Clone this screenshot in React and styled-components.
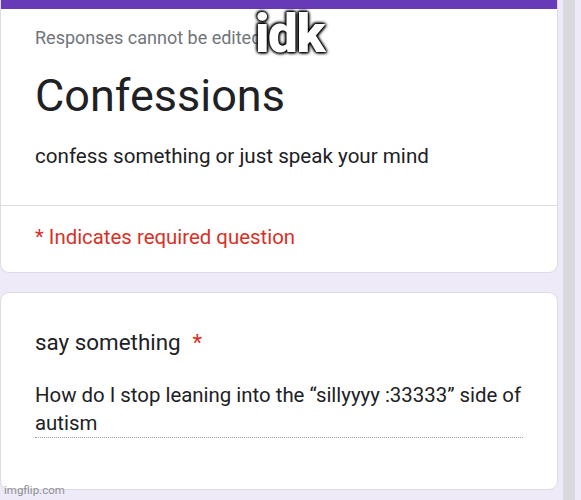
import React from "react";
import styled, { createGlobalStyle } from "styled-components";

const Global = createGlobalStyle`
  html, body { margin: 0; padding: 0; }
  body {
    background: #eeeaf8;
    font-family: Roboto, "Noto Sans", Arial, sans-serif;
    width: 581px;
    height: 500px;
    overflow: hidden;
  }
`;

const Page = styled.div`
  position: relative;
  display: flex;
  width: 581px;
  height: 500px;
`;

const Column = styled.div`
  width: 558px;
  display: flex;
  flex-direction: column;
  gap: 19px;
`;

const Card = styled.section`
  background: #fff;
  border: 1px solid #dcdce2;
  box-sizing: border-box;
  border-radius: ${(p) => (p.$top ? "0 0 9px 9px" : "9px")};
  border-top: ${(p) => (p.$top ? "none" : "1px solid #dcdce2")};
  height: ${(p) => p.$h}px;
  overflow: hidden;
`;

const TopBar = styled.div`
  height: 9px;
  background: #673ab7;
`;

const Header = styled.div`
  padding: 18px 34px 0;
  height: 196px;
  box-sizing: border-box;
`;

const Note = styled.div`
  color: #70757a;
  font-size: 18px;
  line-height: 22px;
`;

const Title = styled.h1`
  margin: 19px 0 0;
  font-size: 45px;
  font-weight: 400;
  color: #202124;
  line-height: 56px;
`;

const Desc = styled.p`
  margin: 18px 0 0;
  font-size: 20.6px;
  color: #202124;
  line-height: 28px;
`;

const Divider = styled.div`
  height: 1px;
  background: #dadce0;
`;

const Required = styled.div`
  padding: 18px 34px 0;
  color: #d93025;
  font-size: 20.4px;
  line-height: 26px;
`;

const Question = styled.div`
  padding: 34px 34px 0;
`;

const QTitle = styled.div`
  font-size: 22.4px;
  color: #202124;
  line-height: 30px;
  display: flex;
  gap: 12px;
`;

const Star = styled.span`
  color: #d93025;
`;

const Answer = styled.div`
  margin-top: 24px;
  width: 488px;
  font-size: 20.4px;
  line-height: 28px;
  color: #202124;
  border-bottom: 1px dotted #9aa0a6;
`;

const Scroll = styled.div`
  margin-left: 5px;
  width: 12px;
  height: 500px;
  background: #d9d9dd;
`;

const Meme = styled.div`
  position: absolute;
  left: 255px;
  top: 4px;
  font-family: Roboto, Arial, sans-serif;
  font-weight: 900;
  font-size: 53px;
  letter-spacing: -1.5px;
  color: #fff;
  line-height: 60px;
  text-shadow: 0 0 4px #000, 0 0 3px #000, 0 0 2px #000, 1px 1px 3px #000, -1px -1px 3px #000;
`;

const Watermark = styled.div`
  position: absolute;
  left: 4px;
  bottom: 3px;
  font-family: Roboto, Arial, sans-serif;
  font-size: 11.5px;
  color: #8f8f95;
`;

export default function App() {
  return (
    <>
      <Global />
      <Page>
        <Column>
          <Card $top $h={273}>
            <TopBar />
            <Header>
              <Note>Responses cannot be edited</Note>
              <Title>Confessions</Title>
              <Desc>confess something or just speak your mind</Desc>
            </Header>
            <Divider />
            <Required>* Indicates required question</Required>
          </Card>
          <Card $h={198}>
            <Question>
              <QTitle>
                <span>say something</span>
                <Star>*</Star>
              </QTitle>
              <Answer>
                How do I stop leaning into the “sillyyyy :33333” side of autism
              </Answer>
            </Question>
          </Card>
        </Column>
        <Scroll />
        <Meme>idk</Meme>
        <Watermark>imgflip.com</Watermark>
      </Page>
    </>
  );
}
